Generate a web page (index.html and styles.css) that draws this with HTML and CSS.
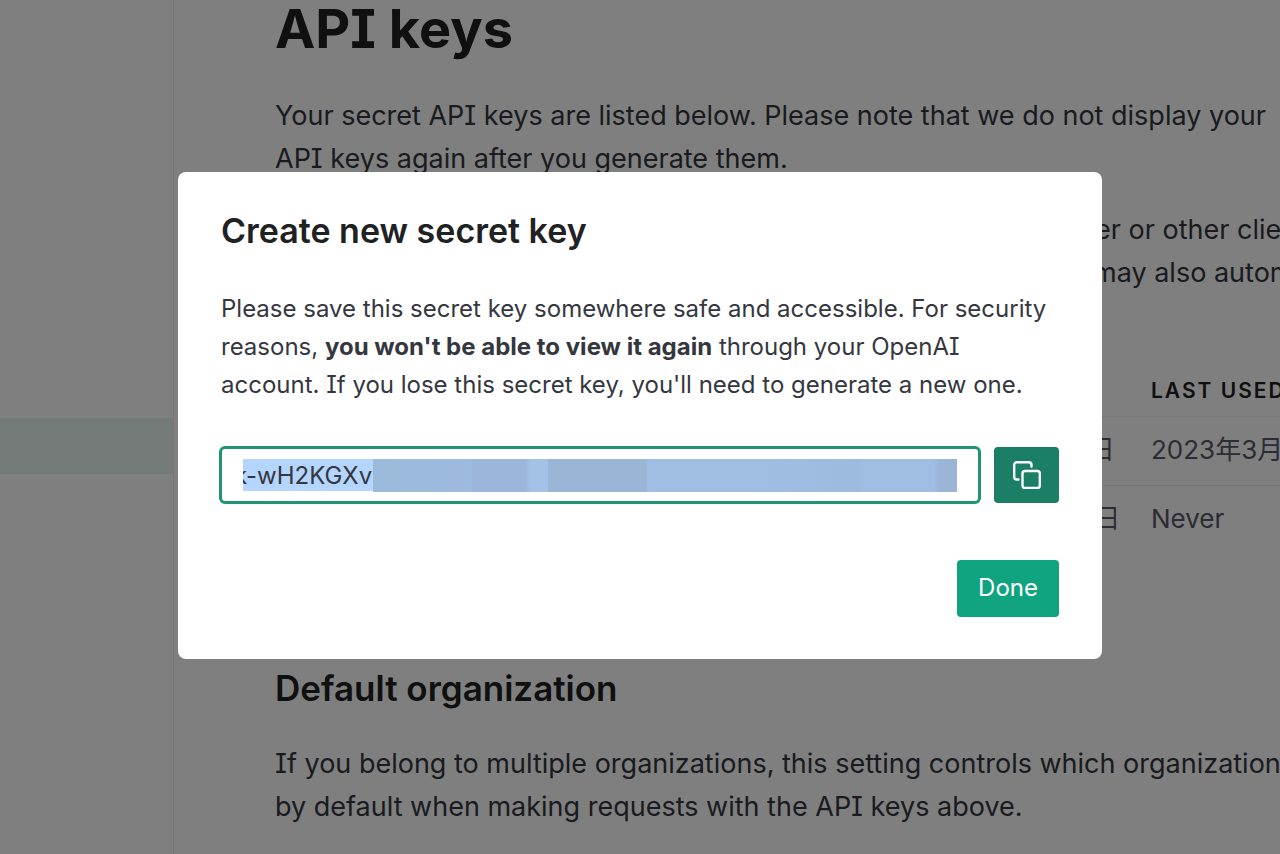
FILE: index.html
```html
<!DOCTYPE html>
<html lang="en">
<head>
<meta charset="utf-8">
<meta name="viewport" content="width=device-width, initial-scale=1">
<title>API keys</title>
<link rel="stylesheet" href="styles.css">
</head>
<body>
<div class="page">
  <nav class="sidebar" aria-label="Account">
    <a class="sidebar-item" href="#keys" aria-label="API keys"></a>
  </nav>
  <main class="content">
    <h1 class="page-title">API keys</h1>
    <p class="text">Your secret API keys are listed below. Please note that we do not display your<br>API keys again after you generate them.</p>
    <p class="text">Do not share your API keys with others or expose it in the browser or other client-side<br>code. In order to protect the security of your accounts, OpenAI may also automatically</p>
    <table class="keys">
      <thead>
        <tr><th class="col-key">Key</th><th class="col-created">Created</th><th class="col-used">Last used</th></tr>
      </thead>
      <tbody>
        <tr><td>sk-...</td><td>2023年3月1日</td><td>2023年3月24日</td></tr>
        <tr><td>sk-...</td><td>2023年3月8日</td><td>Never</td></tr>
      </tbody>
    </table>
    <h2 class="section-title">Default organization</h2>
    <p class="text">If you belong to multiple organizations, this setting controls which organization is used<br>by default when making requests with the API keys above.</p>
  </main>
</div>
<div class="overlay">
  <section class="dialog" role="dialog" aria-modal="true" aria-labelledby="dialog-title">
    <h2 class="dialog-title" id="dialog-title">Create new secret key</h2>
    <p class="dialog-text">Please save this secret key somewhere safe and accessible. For security reasons, <strong>you won't be able to view it again</strong> through your OpenAI account. If you lose this secret key, you'll need to generate a new one.</p>
    <div class="key-row">
      <div class="key-field">
        <input class="key-input" type="text" aria-label="Secret key" value="k-wH2KGXvv" readonly>
        <span class="key-mask"></span>
      </div>
      <button class="copy-button" type="button" aria-label="Copy">
        <svg class="copy-icon" viewBox="0 0 28 28" fill="none" stroke="currentColor" stroke-width="2.4" stroke-linecap="round" stroke-linejoin="round"><rect x="9.500" y="10" width="17.300" height="17" rx="2.5"/><path d="M5.500 18.500H4A2.800 2.800 0 0 1 1.200 15.700V4A2.800 2.800 0 0 1 4 1.200H15.700A2.800 2.800 0 0 1 18.500 4V5.500"/></svg>
      </button>
    </div>
    <div class="actions"><button class="done-button" type="button">Done</button></div>
  </section>
</div>
</body>
</html>
```
FILE: styles.css
```css
* { box-sizing: border-box; }
body {
  margin: 0;
  height: 100vh;
  overflow: hidden;
  background: #fff;
  color: #353740;
  font-family: Inter, "Noto Sans CJK JP", sans-serif;
  font-feature-settings: "cv08";
}
h1, h2, p { margin: 0; }
.page { display: flex; height: 100vh; overflow: hidden; }
.sidebar { flex: 0 0 174px; padding-top: 418px; border-right: 1px solid #ececf1; }
.sidebar-item { display: block; height: 56px; background: #e6f5f1; }
.content { flex: 1 0 auto; padding-left: 101px; }
.page-title { color: #202123; font-size: 54px; line-height: 58px; font-weight: 700; margin-bottom: 36px; }
.text { font-size: 27px; line-height: 43px; margin-bottom: 28px; white-space: nowrap; }
.keys { width: 1160px; margin-top: 70px; border-collapse: collapse; table-layout: fixed; text-align: left; }
.keys th { height: 52px; padding: 2px 0 0; color: #202123; font-size: 21px; font-weight: 600; letter-spacing: 2px; text-transform: uppercase; }
.keys td { height: 69px; padding: 0 0 2px; border-top: 1px solid #ececf1; color: #565869; font-size: 26px; line-height: 32px; }
.keys .col-key { width: 671px; }
.keys .col-created { width: 205px; }
.section-title { margin-top: 112px; margin-bottom: 32px; color: #202123; font-size: 35px; line-height: 44px; font-weight: 600; }
.overlay { position: fixed; inset: 0; padding: 172px 24px 24px; background: rgba(0, 0, 0, 0.5); }
.dialog { max-width: 924px; margin: 0 auto; padding: 36px 43px 42px; border-radius: 8px; background: #fff; }
.dialog-title { color: #202123; font-size: 34px; line-height: 46px; font-weight: 600; margin-bottom: 36px; }
.dialog-text { font-size: 24px; line-height: 38px; margin-bottom: 42px; }
.key-row { display: flex; align-items: center; gap: 13px; }
.key-field { position: relative; flex: 1; margin-left: -2px; }
.key-input {
  display: block;
  width: 100%;
  height: 58px;
  padding: 10px 21px;
  border: 3px solid #1f9373;
  border-radius: 6px;
  outline: 0;
  background: #b4d5fe content-box;
  color: #353740;
  font: inherit;
  font-size: 24px;
  text-indent: -9px;
}
.key-mask {
  position: absolute;
  top: 13px;
  bottom: 12px;
  left: 154px;
  right: 24px;
  background: linear-gradient(90deg, #9bbad9 0, #9dbadf 17%, #9bb6da 17% 26%, #a4c1e7 27% 30%, #9ab5d6 30% 47%, #a0bee3 47% 65%, #9dbbdf 83%, #a0bee3 84% 96%, #9ab5d6 97%);
}
.copy-button, .done-button { height: 56px; border: 0; border-radius: 4px; color: #fff; font: inherit; cursor: pointer; }
.copy-button { display: grid; place-items: center; width: 65px; padding: 0; background: #1a7f64; }
.copy-icon { width: 28px; height: 28px; }
.actions { display: flex; justify-content: flex-end; margin-top: 56px; }
.done-button { height: 57px; padding: 0 21px 2px; background: #10a37f; font-size: 24px; }
```
